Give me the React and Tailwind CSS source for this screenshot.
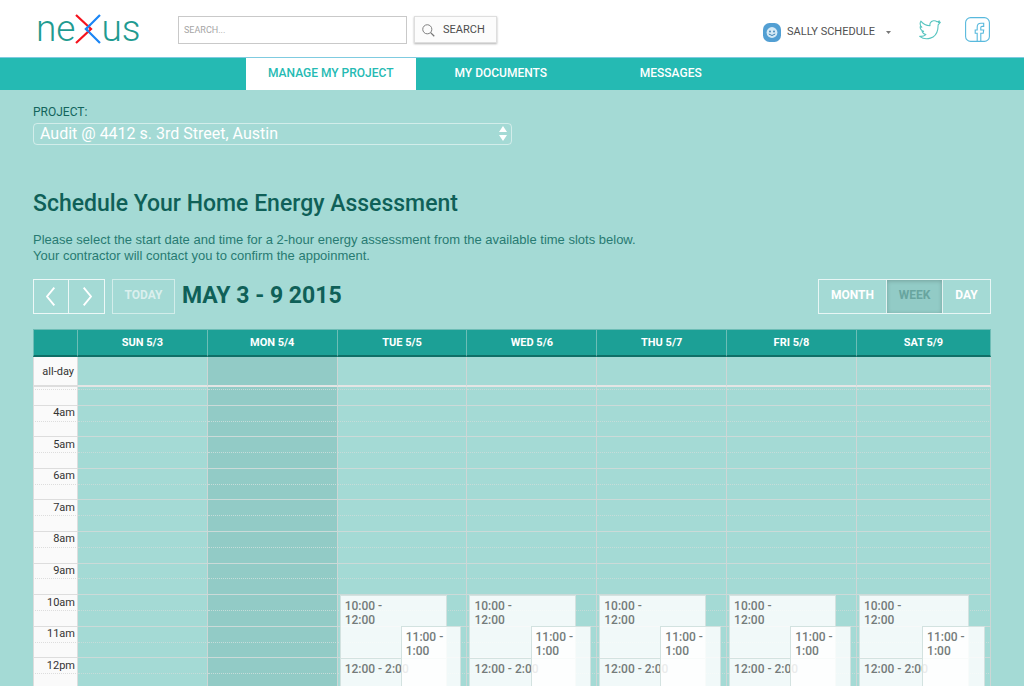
const days = ["SUN 5/3", "MON 5/4", "TUE 5/5", "WED 5/6", "THU 5/7", "FRI 5/8", "SAT 5/9"];
const TODAY = 1;
const FIRST_OPEN_DAY = 2;

// half-hour slots, the label only goes on the full hour
const slots = [
  "", "4am", "", "5am", "", "6am", "", "7am", "", "8am", "", "9am", "",
  "10am", "", "11am", "", "12pm", "",
];

const tabs = ["MANAGE MY PROJECT", "MY DOCUMENTS", "MESSAGES"];

function Logo() {
  return (
    <a href="#" aria-label="nexus" className="flex w-[140px] items-center text-[37px] leading-10 font-light text-[#1f9b91]">
      <span>ne</span>
      <svg viewBox="0 0 26 30" className="h-[30px] w-[26px]" fill="none" strokeWidth="2.2">
        <path d="M25 1 L11 15 L25 29" stroke="#1b86f5" />
        <path d="M1 1 L16 15 L1 29" stroke="#f5121d" />
        <path d="M15 11 L11 15 L14 18" stroke="#1b86f5" />
      </svg>
      <span>us</span>
    </a>
  );
}

function Header() {
  return (
    <header className="flex h-[57px] shrink-0 items-start bg-white pr-[34px] pl-[36px]">
      <div className="pt-[9px]">
        <Logo />
      </div>
      <form className="flex gap-[7px] pt-4 pl-[2px]">
        <input
          type="text"
          aria-label="Search"
          placeholder="SEARCH..."
          className="h-7 w-[229px] border border-[#c9c9c9] px-[5px] text-[9px] placeholder:text-[#a5a5a5]"
        />
        <button type="button" className="flex h-[27px] w-[83px] items-center gap-2 border border-[#dedede] bg-[#fcfcfc] pt-[2px] pl-[7px] text-[11px] text-[#4c4c4c] shadow-[0_1px_2px_rgba(0,0,0,0.3)]">
          <svg viewBox="0 0 14 14" className="size-[13px]" fill="none" stroke="#777" strokeWidth="1">
            <circle cx="5.7" cy="5.7" r="4.9" />
            <path d="M9.3 9.3 L13.2 13.2" strokeWidth="1.4" />
          </svg>
          SEARCH
        </button>
      </form>
      <div className="ml-auto flex items-center pt-[17px]">
        <button type="button" className="flex items-center gap-[6px] pt-[5px] text-[11px] text-[#505050]">
          <svg viewBox="0 0 18 19" className="h-[19px] w-[18px]">
            <rect width="18" height="19" rx="6.5" fill="#529fd3" />
            <circle cx="9" cy="9.5" r="5.4" fill="#d5eaf6" />
            <circle cx="7" cy="8.5" r="0.9" fill="#3d83b5" />
            <circle cx="11" cy="8.5" r="0.9" fill="#3d83b5" />
            <path d="M5.8 11 Q9 14 12.2 11" fill="none" stroke="#3d83b5" strokeWidth="1" />
          </svg>
          <span className="pt-px">SALLY SCHEDULE</span>
          <svg viewBox="0 0 5 3" className="ml-[5px] h-[3px] w-[5px]">
            <path d="M0 0 H5 L2.5 3 Z" fill="#777" />
          </svg>
        </button>
        <a href="#" aria-label="Twitter" className="ml-7">
          <svg viewBox="0 0 24 24" className="size-[22px]" fill="none" stroke="#58c5c0" strokeWidth="1.2" strokeLinejoin="round">
            <path d="M23.2 3.6 L21.2 3.8 L22.3 2.2 L19.8 3.1 C17.6 1 13.6 1.6 12.3 4.4 C11.9 5.3 11.8 6.3 12 7.4 C7.8 7.2 4.4 5.4 2 2.4 C.8 4.6 1.1 7 3 9 L1.2 8.5 C1.3 10.9 2.7 12.7 5 13.5 L3.3 13.7 C4 15.5 5.4 16.7 7.5 17 C5.8 18.5 3.3 19.2 .7 18.9 C7.5 24 18.5 21.5 20.4 11.5 C20.8 9.5 20.7 8 20.9 6.5 Z" />
          </svg>
        </a>
        <a href="#" aria-label="Facebook" className="ml-6">
          <svg viewBox="0 0 25 25" className="size-[25px]" fill="none" stroke="#58b9dd" strokeWidth="1.1">
            <rect x=".6" y=".6" width="23.8" height="23.8" rx="5" />
            <path d="M12.2 24.4 V16.2 H10.2 V13 H12.2 V10 C12.2 7.3 13.8 6.2 16 6.2 H18.7 V9.4 H17 C16.1 9.4 15.8 9.8 15.8 10.6 V13 H18.7 L18.2 16.2 H15.8 V24.4" />
          </svg>
        </a>
      </div>
    </header>
  );
}

function Nav() {
  return (
    <nav className="flex h-[33px] shrink-0 border-t border-[#7fcbe0] bg-[#25bab3] pl-[24%]">
      {tabs.map((tab, i) => (
        <a
          key={tab}
          href="#"
          className={`flex w-[170px] items-center justify-center pb-[2px] text-xs font-medium ${
            i === 0 ? "bg-white text-[#25bab3]" : "text-white"
          }`}
        >
          {tab}
        </a>
      ))}
    </nav>
  );
}

function Toolbar() {
  return (
    <div className="mt-[14px] flex h-[36px] items-center">
      <div className="flex h-[35px] border border-white/80">
        <button type="button" aria-label="Previous week" className="flex w-[35px] items-center justify-center border-r border-white/80">
          <svg viewBox="0 0 10 19" className="h-[19px] w-[10px]" fill="none" stroke="white" strokeWidth="1.9">
            <path d="M8.3 .7 L1 9.5 L8.3 18.3" />
          </svg>
        </button>
        <button type="button" aria-label="Next week" className="flex w-[35px] items-center justify-center">
          <svg viewBox="0 0 10 19" className="h-[19px] w-[10px]" fill="none" stroke="white" strokeWidth="1.9">
            <path d="M1.7 .7 L9 9.5 L1.7 18.3" />
          </svg>
        </button>
      </div>
      <button type="button" className="ml-[7px] h-[35px] w-[63px] border border-white/50 pb-[3px] text-xs font-bold text-white/60">
        TODAY
      </button>
      <h2 className="ml-[7px] text-[23px] leading-7 font-bold text-[#0f6058]">MAY 3 - 9 2015</h2>
      <div className="ml-auto flex h-[35px] border border-white/75 text-xs font-bold text-white">
        <button type="button" className="w-[67px] pb-[3px]">MONTH</button>
        <button type="button" className="w-[57px] border-x border-white/75 bg-[#92cbc6] pb-[3px] text-[#68a59f] shadow-[inset_0_1px_4px_rgba(0,0,0,0.2)]">
          WEEK
        </button>
        <button type="button" className="w-[47px] pb-[3px]">DAY</button>
      </div>
    </div>
  );
}

function Columns() {
  return (
    <colgroup>
      <col className="w-[45px]" />
      <col span={6} />
      <col className="w-[14%]" />
    </colgroup>
  );
}

function OpenSlots() {
  const base = "absolute border border-[#d3e2e0] px-1 pt-[3px] text-xs leading-[14px] font-medium text-[#747b7a]";
  return (
    <>
      <div className={`${base} top-0 left-[2px] h-16 w-[83%] bg-white/85`}>
        10:00 -<br />12:00
      </div>
      <div className={`${base} top-[63px] left-[2px] h-16 w-[83%] bg-white/85`}>12:00 - 2:00</div>
      <div className={`${base} top-[31px] left-[49%] h-[65px] w-[47%] bg-white/85`}>
        11:00 -<br />1:00
      </div>
    </>
  );
}

function WeekCalendar() {
  return (
    <div className="mt-[15px] min-h-0 flex-1 overflow-hidden">
      <table className="w-full table-fixed border-separate border-spacing-0">
        <Columns />
        <thead>
          <tr className="h-[28px] bg-[#1ca096] text-[11px] text-white">
            <th aria-label="Time" className="border-x border-t border-b-2 border-x-[#6dbdb6] border-t-[#6dbdb6] border-b-[#0f6f67]" />
            {days.map((day) => (
              <th key={day} className="border-t border-r border-b-2 border-t-[#6dbdb6] border-r-[#6dbdb6] border-b-[#0f6f67] p-0 pt-[2px] font-bold">
                {day}
              </th>
            ))}
          </tr>
        </thead>
        <tbody>
          <tr className="h-[30px]">
            <th className="border-x border-b-2 border-[#dddddd] bg-[#fafafa] p-0 pt-[2px] pr-[3px] text-right text-[11px] font-normal text-[#333]">
              all-day
            </th>
            {days.map((day, i) => (
              <td key={day} className={`border-r border-b-2 border-r-[#cdd6d5] border-b-[#e3e5e4] p-0 ${i === TODAY ? "bg-[#92cbc6]" : ""}`} />
            ))}
          </tr>
          <tr className="h-[2px]">
            <td className="border-x border-[#dddddd] bg-[#fafafa] p-0" />
            {days.map((day, i) => (
              <td key={day} className={`border-r border-[#cdd6d5] p-0 ${i === TODAY ? "bg-[#92cbc6]" : ""}`} />
            ))}
          </tr>
        </tbody>
      </table>
      <table className="h-[300px] w-full table-fixed border-separate border-spacing-0">
        <Columns />
        <tbody>
          {slots.map((label, row) => {
            const line = label ? "border-t-[#cbdad8]" : "[border-top-style:dotted] border-t-[#c6dcd9]";
            return (
              <tr key={row} className="h-[15px]">
                <th className={`border-x border-t border-x-[#dddddd] bg-[#fafafa] p-0 pr-[2px] text-right text-[11px] leading-[14px] font-normal text-[#333] ${label ? "border-t-[#dddddd]" : "[border-top-style:dotted] border-t-[#dddddd]"}`}>
                  {label}
                </th>
                {days.map((day, i) => {
                  const open = label === "10am" && i >= FIRST_OPEN_DAY;
                  return (
                    <td
                      key={day}
                      className={`border-t border-r border-r-[#cdd6d5] p-0 ${line} ${i === TODAY ? "bg-[#92cbc6]" : ""} ${open ? "relative" : ""}`}
                    >
                      {open && <OpenSlots />}
                    </td>
                  );
                })}
              </tr>
            );
          })}
        </tbody>
      </table>
    </div>
  );
}

export default function App() {
  return (
    <div className="flex h-screen flex-col overflow-hidden bg-[#a4dad5] font-['Roboto',sans-serif]">
      <Header />
      <Nav />
      <main className="flex min-h-0 flex-1 flex-col px-[33px] pt-[13px]">
        <label htmlFor="project" className="text-xs leading-[18px] text-[#12645c]">PROJECT:</label>
        <div className="relative mt-[2px] h-[22px] w-1/2">
          <select
            id="project"
            className="block h-full w-full appearance-none rounded border border-white/50 bg-transparent pb-px pl-[6px] text-base leading-4 text-white"
          >
            <option>Audit @ 4412 s. 3rd Street, Austin</option>
          </select>
          <svg viewBox="0 0 8 15" className="pointer-events-none absolute top-[3px] right-[5px] h-[15px] w-2" fill="white">
            <path d="M4 0 L8 6 H0 Z M0 9 H8 L4 15 Z" />
          </svg>
        </div>
        <h1 className="mt-[45px] text-[23px] leading-7 font-medium text-[#0f6058]">Schedule Your Home Energy Assessment</h1>
        <p className="mt-[14px] font-['Liberation_Sans',sans-serif] text-[13px] leading-4 text-[#287a72]">
          Please select the start date and time for a 2-hour energy assessment from the available time slots below.
          <br />
          Your contractor will contact you to confirm the appoinment.
        </p>
        <Toolbar />
        <WeekCalendar />
      </main>
    </div>
  );
}
